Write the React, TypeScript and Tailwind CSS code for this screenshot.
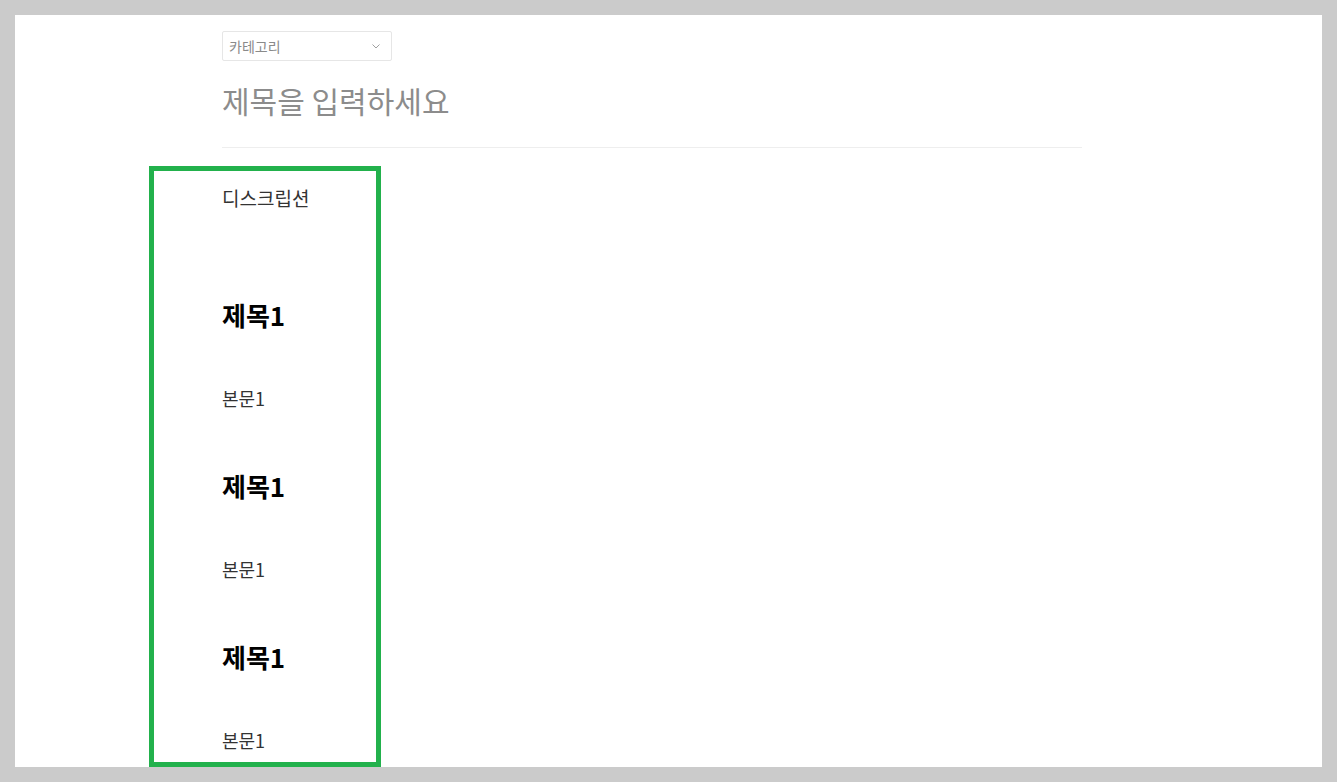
const font = { fontFamily: '"Noto Sans CJK KR", "Noto Sans", sans-serif' };

function Section({ first }: { first?: boolean }) {
  return (
    <>
      <h2 className={`${first ? 'mt-[56px]' : 'mt-[60px]'} text-[26px] leading-[32px] font-bold text-black`}>제목1</h2>
      <p className="mt-[55px] text-[18px] leading-[24px] text-[#333]">본문1</p>
    </>
  );
}

export default function App() {
  return (
    <div className="min-h-screen bg-[#cbcbcb] p-[15px]" style={font}>
      <div className="relative h-[752px] overflow-hidden bg-white">
        <div className="ml-[207px] flex w-[860px] flex-col pt-[16px]">
          {/* 카테고리 선택 */}
          <div className="flex h-[30px] w-[170px] items-center justify-between rounded-[2px] border border-[#e6e6e6] pl-[6px] pr-[11px] text-[14px] text-[#8a8a8a]">
            <span>카테고리</span>
            <svg width="8" height="5" viewBox="0 0 8 5" fill="none">
              <polyline points="0.5,0.5 4,4 7.5,0.5" stroke="#a0a0a0" strokeWidth="1" />
            </svg>
          </div>

          {/* 제목 입력 */}
          <h1 className="mt-[19px] text-[30px] leading-[40px] text-[#8c8c8c]">제목을 입력하세요</h1>
          <div className="mt-[27px] h-px bg-[#eeeeee]" />

          {/* 본문 */}
          <p className="mt-[36px] text-[19px] leading-[28px] text-[#333]">디스크립션</p>
          <div className="mt-[31px] flex flex-col">
            <Section first />
            <Section />
            <Section />
          </div>
        </div>

        {/* 강조 박스 */}
        <div className="absolute left-[134px] top-[151px] h-[601px] w-[232px] border-[5px] border-[#22b14c]" />
      </div>
    </div>
  );
}
